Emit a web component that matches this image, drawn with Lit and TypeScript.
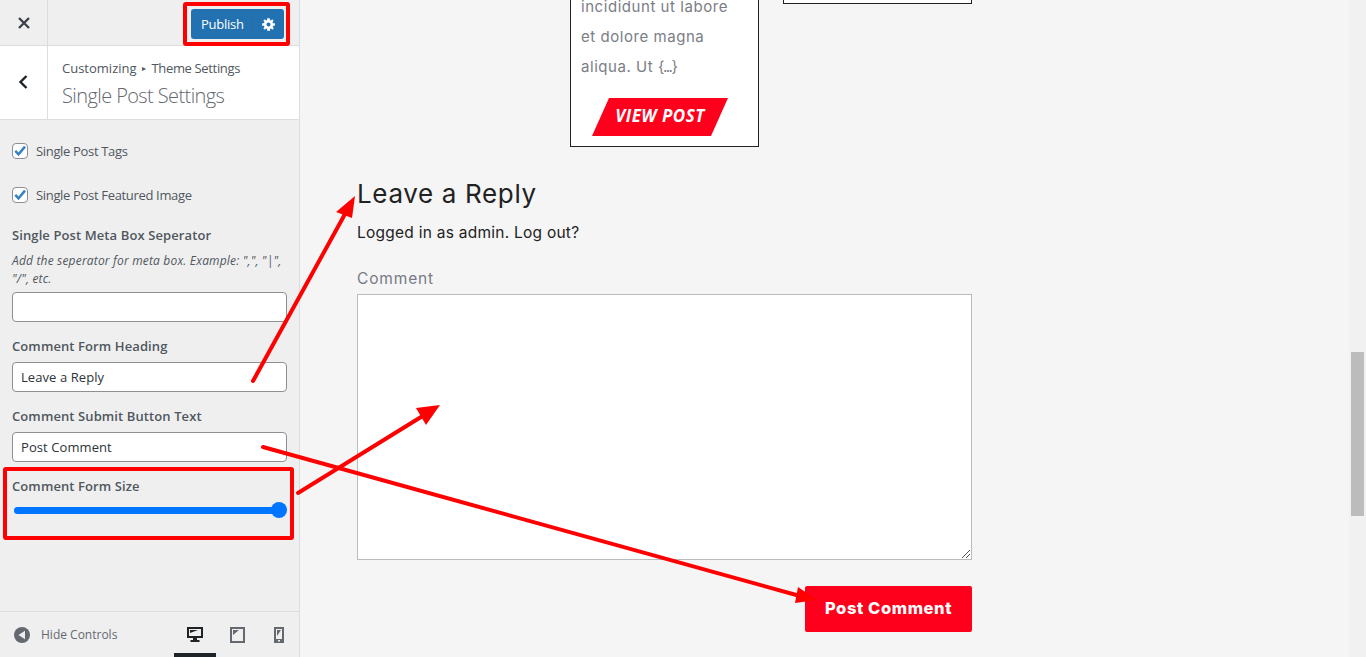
import { LitElement, html, css, svg } from "lit";
import { customElement } from "lit/decorators.js";

@customElement("app-root")
export class AppRoot extends LitElement {
  static styles = css`
    :host { display: block; width: 1366px; height: 657px; position: relative; overflow: hidden; background: #f5f5f5; font-family: "Open Sans", "Noto Sans", sans-serif; }
    .page { display: flex; height: 657px; }
    .side { width: 300px; flex: none; box-sizing: border-box; background: #efefef; border-right: 1px solid #ddd; display: flex; flex-direction: column; color: #50575e; font-size: 13px; }
    .top { height: 46px; box-sizing: border-box; border-bottom: 1px solid #ddd; display: flex; align-items: center; flex: none; }
    .close { width: 47px; height: 45px; border-right: 1px solid #ddd; display: flex; align-items: center; justify-content: center; }
    .publish { margin-left: 143px; width: 93px; height: 30px; margin-top: 3px; background: #2271b1; border-radius: 3px; color: #fff; display: flex; align-items: center; box-sizing: border-box; font-size: 13px; letter-spacing: -.25px; }
    .publish span { width: 62px; padding-left: 10px; box-sizing: border-box; line-height: 30px; border-right: 1px solid #2a6ca3; }
    .publish svg { margin-left: 8px; }
    .head { height: 73px; background: #fff; border-bottom: 1px solid #ddd; display: flex; flex: none; }
    .back { width: 48px; flex: none; border-right: 1px solid #ddd; display: flex; align-items: center; justify-content: center; padding-right: 2px; box-sizing: border-box; padding-bottom: 1px; }
    .crumbs { padding: 13px 0 0 14px; }
    .crumb { font-size: 13px; line-height: 18px; color: #50575e; display: flex; align-items: center; gap: 5.500px; }
    .crumb i { font-style: normal; font-size: 8px; }
    .crumb .theme { letter-spacing: -.35px; }
    .title { font-size: 20px; line-height: 27px; color: #646970; font-weight: 300; margin-top: 5px; letter-spacing: -.6px; }
    .controls { flex: 1; padding: 0 12px; position: relative; }
    .check { display: flex; align-items: center; gap: 8px; height: 16px; letter-spacing: -.33px; }
    .check.a { margin-top: 23px; }
    .check.b { margin-top: 28px; }
    .box { width: 14px; height: 14px; border: 1px solid #8c8f94; border-radius: 4px; background: #fff; display: flex; align-items: center; justify-content: center; }
    .label { font-weight: 600; font-size: 13px; line-height: 18px; color: #50575e; letter-spacing: .1px; }
    .desc { font-style: italic; font-size: 12px; line-height: 18px; color: #50575e; margin-top: 8px; letter-spacing: .18px; }
    .input { width: 275px; height: 30px; box-sizing: border-box; border: 1px solid #8c8f94; border-radius: 4px; background: #fff; font-size: 13px; line-height: 28px; padding-left: 8px; color: #2c3338; letter-spacing: .08px; }
    .mt1 { margin-top: 23px; }
    .mt2 { margin-top: 15px; }
    .mt3 { margin-top: 7px; }
    .mt4 { margin-top: 4px; }
    .slider { width: 275px; height: 16px; margin-top: 7px; position: relative; display: flex; align-items: center; }
    .track { height: 7px; width: 268px; margin-left: 2px; border-radius: 4px; background: #0075ff; }
    .thumb { position: absolute; right: 0; top: 0; width: 16px; height: 16px; border-radius: 50%; background: #0075ff; }
    .foot { height: 46px; border-top: 1px solid #ddd; flex: none; position: relative; display: flex; align-items: center; box-sizing: border-box; padding-left: 14px; }
    .hide { margin-left: 11px; font-size: 12px; color: #646970; }
    .devices { position: absolute; left: 174px; top: 0; display: flex; height: 45px; }
    .dev { width: 42px; display: flex; justify-content: center; padding-top: 15px; box-sizing: border-box; }
    .dev.on { border-bottom: 4px solid #1d2327; }
    .main { flex: 1; position: relative; overflow: hidden; }
    .cols { display: flex; gap: 24px; margin-left: 270px; width: 402px; align-items: flex-start; }
    .card { width: 189px; height: 147px; box-sizing: border-box; border: 1px solid #222; border-top: 0; background: #fff; padding-left: 10px; font-family: "Inter", sans-serif; }
    .card p { margin: 0; font-size: 15px; line-height: 30px; color: #7a7d85; letter-spacing: .55px; white-space: nowrap; }
    .card p:first-child { margin-top: -8px; }
    .card p b { font-weight: 400; letter-spacing: -1.500px; }
    .view { width: 136px; height: 38px; margin: 16px 0 0 11px; background: #ff001c; clip-path: polygon(17px 0, 100% 0, 119px 100%, 0 100%); color: #fff; font-family: "Open Sans", sans-serif; font-style: italic; font-weight: 700; font-size: 17px; line-height: 36px; text-align: center; letter-spacing: .5px; }
    .other { width: 189px; height: 4px; box-sizing: border-box; border: 1px solid #222; border-top: 0; background: #fff; }
    .form { margin-left: 57px; width: 615px; font-family: "Inter", sans-serif; }
    h2 { margin: 30px 0 0; font-size: 26px; font-weight: 400; line-height: 34px; color: #222; letter-spacing: .65px; }
    .logged { margin-top: 12px; font-size: 15.500px; line-height: 20px; color: #222; letter-spacing: .25px; }
    .cl { margin-top: 26px; font-size: 15.500px; line-height: 20px; color: #777a88; letter-spacing: .85px; }
    .ta { height: 266px; box-sizing: border-box; border: 1px solid #bbb; background: #fff; margin-top: 5px; position: relative; }
    .grip { position: absolute; right: 0; bottom: 0; }
    .post { margin: 26px 0 0 448px; width: 167px; height: 46px; background: #ff001c; border-radius: 2px; color: #fff; font-weight: 800; font-size: 16.500px; line-height: 45px; text-align: center; letter-spacing: .6px; }
    .scroll { width: 17px; position: absolute; top: 0; right: 0; bottom: 0; background: #f1f1f1; }
    .sthumb { position: absolute; left: 2px; right: 2px; top: 352px; height: 164px; background: #bcbcbc; }
    .over { position: absolute; inset: 0; width: 1366px; height: 657px; pointer-events: none; }
  `;

  private tick() {
    return html`<span class="box"><svg width="14" height="14" viewBox="0 0 14 14"><path d="M2.300 6.800 5.500 10.300 12 2.600" fill="none" stroke="#3582c4" stroke-width="2.500"/></svg></span>`;
  }

  render() {
    return html`
      <div class="page">
        <aside class="side">
          <div class="top">
            <div class="close"><svg width="14" height="14" viewBox="0 0 14 14"><path d="M2 2 12 12M12 2 2 12" stroke="#3c434a" stroke-width="2.400"/></svg></div>
            <div class="publish"><span>Publish</span>
              <svg width="15" height="15" viewBox="0 0 20 20"><path fill="#fff" fill-rule="evenodd" d="M18.500 11.800h-2.300a6.500 6.500 0 0 1-.6 1.400l1.600 1.700-2 2-1.700-1.600a6.500 6.500 0 0 1-1.400.6v2.300H8.200v-2.300a6.500 6.500 0 0 1-1.400-.6l-1.700 1.600-2-2 1.600-1.700a6.500 6.500 0 0 1-.6-1.400H1.500V8.200h2.600a6.500 6.500 0 0 1 .6-1.400L3.100 5.100l2-2 1.700 1.600a6.500 6.500 0 0 1 1.400-.6V1.500h3.600v2.600a6.500 6.500 0 0 1 1.400.6l1.700-1.600 2 2-1.600 1.700a6.500 6.500 0 0 1 .6 1.400h2.600zM10 7.300a2.700 2.700 0 1 0 0 5.400 2.700 2.700 0 0 0 0-5.400z"/></svg>
            </div>
          </div>
          <div class="head">
            <div class="back"><svg width="12" height="16" viewBox="0 0 12 16"><path d="M9.500 2 3.500 8l6 6" fill="none" stroke="#1d2327" stroke-width="2.400"/></svg></div>
            <div class="crumbs">
              <div class="crumb"><span>Customizing</span><i>▸</i><span class="theme">Theme Settings</span></div>
              <div class="title">Single Post Settings</div>
            </div>
          </div>
          <div class="controls">
            <div class="check a">${this.tick()}<span>Single Post Tags</span></div>
            <div class="check b">${this.tick()}<span>Single Post Featured Image</span></div>
            <div class="label mt1">Single Post Meta Box Seperator</div>
            <div class="desc">Add the seperator for meta box. Example: ",", "|", "/", etc.</div>
            <div class="input mt4"></div>
            <div class="label mt2">Comment Form Heading</div>
            <div class="input mt3">Leave a Reply</div>
            <div class="label mt2">Comment Submit Button Text</div>
            <div class="input mt3">Post Comment</div>
            <div class="label mt2">Comment Form Size</div>
            <div class="slider"><div class="track"></div><div class="thumb"></div></div>
          </div>
          <div class="foot">
            <svg width="16" height="16" viewBox="0 0 16 16"><circle cx="8" cy="8" r="8" fill="#646970"/><path d="M11 3.800v8.400L4.500 8z" fill="#eee"/></svg>
            <span class="hide">Hide Controls</span>
            <div class="devices">
              <div class="dev on"><svg width="16" height="16" viewBox="0 0 16 16"><path fill="#1d2327" fill-rule="evenodd" d="M0 0h16v11H10v2h2.500v2h-9v-2H6v-2H0zM2 2v7h12V2zM3 3h8L3 6z"/></svg></div>
              <div class="dev"><svg width="15" height="16" viewBox="0 0 15 16"><path fill="#646970" fill-rule="evenodd" d="M0 0h15v16H0zM2 2v12h11V2zM3 3h6L3 8z"/></svg></div>
              <div class="dev"><svg width="10" height="16" viewBox="0 0 10 16"><path fill="#646970" fill-rule="evenodd" d="M0 0h10v16H0zM2 2v10h6V2zM3 3h4L3 9zM4 13h2v1.500H4z"/></svg></div>
            </div>
          </div>
        </aside>
        <main class="main">
          <div class="cols">
            <div class="card">
              <p>incididunt ut labore</p>
              <p>et dolore magna</p>
              <p>aliqua. Ut <b>{...}</b></p>
              <div class="view">VIEW POST</div>
            </div>
            <div class="other"></div>
          </div>
          <div class="form">
            <h2>Leave a Reply</h2>
            <div class="logged">Logged in as admin. Log out?</div>
            <div class="cl">Comment</div>
            <div class="ta"><svg class="grip" width="10" height="10" viewBox="0 0 10 10"><path d="M1 9 9 1M5 9 9 5" stroke="#555" fill="none"/></svg></div>
            <div class="post">Post Comment</div>
          </div>
          <div class="scroll"><div class="sthumb"></div></div>
        </main>
      </div>
      <svg class="over" viewBox="0 0 1366 657">
        ${svg`
          <g fill="none" stroke="#ff0000" stroke-width="4">
            <rect x="185" y="4" width="103" height="40" rx="1"/>
            <rect x="5" y="469" width="287" height="69" rx="1"/>
          </g>
          <g stroke="#ff0000" stroke-width="4" stroke-linecap="round" fill="#ff0000">
            <path d="M253 381 345 214"/>
            <path d="M298 493 421 417"/>
            <path d="M263 447 800 596"/>
          </g>
          <g fill="#ff0000">
            <path d="M355 196 336 212 352 218z"/>
            <path d="M440 405 416 408 426 425z"/>
            <path d="M817 600 798 587 795 603z"/>
          </g>
        `}
      </svg>
    `;
  }
}
